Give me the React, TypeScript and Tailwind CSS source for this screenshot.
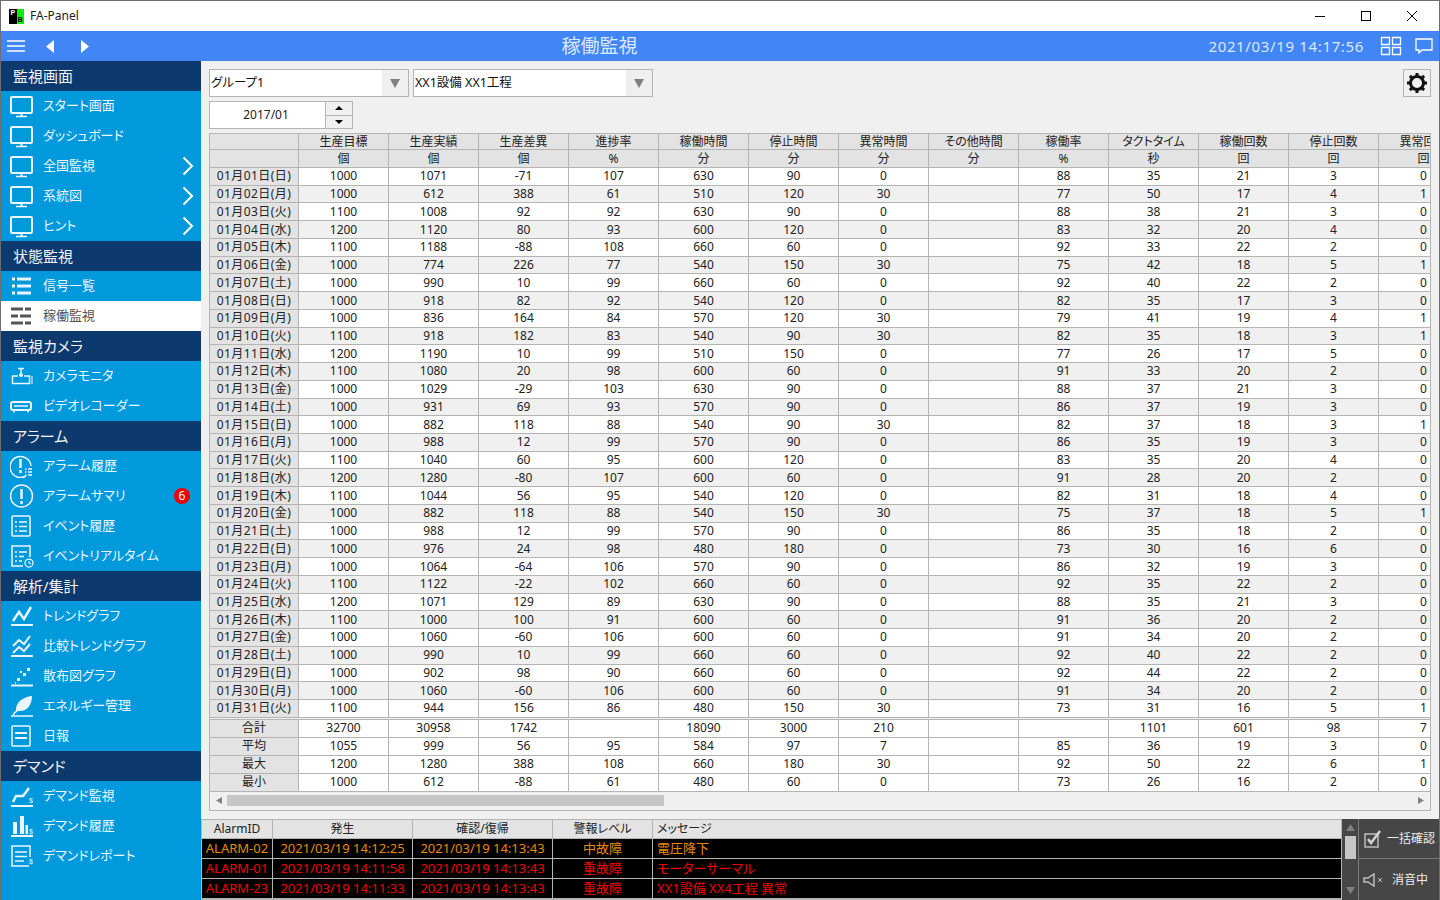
import { ReactNode } from 'react';

type Item = { label: string; icon: ReactNode; more?: boolean; badge?: string; active?: boolean };
type Section = { title: string; items: Item[] };

const Svg = ({ children }: { children: ReactNode }) => (
  <svg width="24" height="24" viewBox="0 0 24 24" fill="none" stroke="currentColor" strokeWidth="2">
    {children}
  </svg>
);

const Monitor = () => (
  <Svg>
    <rect x="1" y="3" width="21" height="16" rx="1" />
    <path d="M11.5 19v3" />
    <path d="M6 22.5h11" strokeWidth="1.5" />
  </Svg>
);

const Lines = () => (
  <Svg>
    <path d="M2 5h3M7 5h14M2 12h3M7 12h14M2 19h3M7 19h14" strokeWidth="3" />
  </Svg>
);

const Bars = () => (
  <Svg>
    <path d="M1 5h12M15 5h6M1 12h7M10 12h11M1 19h12M15 19h6" strokeWidth="3" />
  </Svg>
);

const Camera = () => (
  <Svg>
    <path d="M8 4.5h6M11 4v5" strokeWidth="1.5" />
    <circle cx="11" cy="11" r="2" fill="currentColor" stroke="none" />
    <path d="M8 12H2.5v7.5h17V12H14" strokeWidth="1.5" />
    <path d="M22 12v8" strokeWidth="1.5" opacity="0.7" />
  </Svg>
);

const Recorder = () => (
  <Svg>
    <rect x="1" y="8" width="20" height="8" rx="2" />
    <path d="M4 12h14" strokeWidth="1.5" />
    <path d="M4 17v1.5M18 17v1.5" strokeWidth="1.5" />
  </Svg>
);

const AlarmLog = () => (
  <Svg>
    <path d="M16 22a10.5 10.5 0 1 1 5-10" strokeWidth="1.5" />
    <path d="M10.5 5v9M10.5 16v3" strokeWidth="2.5" />
    <path d="M15 15h1.5M18 15h4M15 18h1.5M18 18h4M15 21h1.5M18 21h4" strokeWidth="1.5" />
  </Svg>
);

const Alarm = () => (
  <Svg>
    <circle cx="11.5" cy="12" r="11" strokeWidth="1.5" />
    <path d="M11.5 5v10M11.5 17v3" strokeWidth="2.5" />
  </Svg>
);

const EventLog = () => (
  <Svg>
    <rect x="2" y="2" width="18" height="20" rx="1" strokeWidth="1.5" />
    <path d="M5 8h2M9 8h8M5 12.5h2M9 12.5h8M5 17h2M9 17h8" strokeWidth="1.5" />
  </Svg>
);

const EventLive = () => (
  <Svg>
    <path d="M13 22H2V2h18v11" strokeWidth="1.5" />
    <path d="M5 8h2M9 8h8M5 12.5h2M9 12.5h5M5 17h2M9 17h3" strokeWidth="1.5" />
    <circle cx="19" cy="19" r="4" strokeWidth="1.25" />
    <path d="M19 17v2.5h2" strokeWidth="1" />
  </Svg>
);

const Trend = () => (
  <Svg>
    <path d="M1 21h22" />
    <path d="M3 17l6-9 5 7 7-12" strokeWidth="2.5" />
  </Svg>
);

const Compare = () => (
  <Svg>
    <path d="M1 22h22" />
    <path d="M3 12l6-6 5 4 6-8" strokeWidth="2" />
    <path d="M3 19l6-6 5 4 6-7" strokeWidth="2" />
  </Svg>
);

const Scatter = () => (
  <Svg>
    <path d="M1 21.5h22" />
    <path d="M7 17h3v-3H7zM13 12h3V9h-3zM17 7h3V4h-3zM10 9h2V7h-2z" fill="currentColor" stroke="none" />
    <path d="M5 19h1" strokeWidth="1.5" />
  </Svg>
);

const Leaf = () => (
  <Svg>
    <path d="M1 22h22" strokeWidth="1.5" />
    <path d="M6 18C5 9 12 3 22 2c0 9-5 15-12 15-2 0-3 0-4 1z" fill="currentColor" stroke="none" />
    <path d="M3 21c1-2 2-3 4-4" strokeWidth="1.5" />
  </Svg>
);

const Daily = () => (
  <Svg>
    <rect x="2" y="2" width="18" height="20" rx="1" strokeWidth="1.5" />
    <path d="M5 9h12M5 14h12" strokeWidth="2" />
  </Svg>
);

const Dollar = ({ x, y }: { x: number; y: number }) => (
  <text x={x} y={y} fontSize="7" fill="currentColor" stroke="none" fontFamily="Liberation Sans">$</text>
);

const DemandLine = () => (
  <Svg>
    <path d="M1 22h22" />
    <path d="M3 18l3-6h7l6-8" strokeWidth="2.5" />
    <Dollar x={19} y={19} />
  </Svg>
);

const DemandBars = () => (
  <Svg>
    <path d="M1 22h22" />
    <path d="M3 8h4v12H3zM10 2h4v18h-4zM15.5 11h2.5v9h-2.5z" fill="currentColor" stroke="none" />
    <Dollar x={19} y={20} />
  </Svg>
);

const DemandReport = () => (
  <Svg>
    <path d="M20 13V2H2v20h17" strokeWidth="1.5" />
    <path d="M5 8h12M5 12.5h12M5 17h9" strokeWidth="1.5" />
    <Dollar x={19} y={20} />
  </Svg>
);

const sections: Section[] = [
  {
    title: '監視画面',
    items: [
      { label: 'スタート画面', icon: <Monitor /> },
      { label: 'ダッシュボード', icon: <Monitor /> },
      { label: '全国監視', icon: <Monitor />, more: true },
      { label: '系統図', icon: <Monitor />, more: true },
      { label: 'ヒント', icon: <Monitor />, more: true },
    ],
  },
  {
    title: '状態監視',
    items: [
      { label: '信号一覧', icon: <Lines /> },
      { label: '稼働監視', icon: <Bars />, active: true },
    ],
  },
  {
    title: '監視カメラ',
    items: [
      { label: 'カメラモニタ', icon: <Camera /> },
      { label: 'ビデオレコーダー', icon: <Recorder /> },
    ],
  },
  {
    title: 'アラーム',
    items: [
      { label: 'アラーム履歴', icon: <AlarmLog /> },
      { label: 'アラームサマリ', icon: <Alarm />, badge: '6' },
      { label: 'イベント履歴', icon: <EventLog /> },
      { label: 'イベントリアルタイム', icon: <EventLive /> },
    ],
  },
  {
    title: '解析/集計',
    items: [
      { label: 'トレンドグラフ', icon: <Trend /> },
      { label: '比較トレンドグラフ', icon: <Compare /> },
      { label: '散布図グラフ', icon: <Scatter /> },
      { label: 'エネルギー管理', icon: <Leaf /> },
      { label: '日報', icon: <Daily /> },
    ],
  },
  {
    title: 'デマンド',
    items: [
      { label: 'デマンド監視', icon: <DemandLine /> },
      { label: 'デマンド履歴', icon: <DemandBars /> },
      { label: 'デマンドレポート', icon: <DemandReport /> },
    ],
  },
];

const headers = ['生産目標', '生産実績', '生産差異', '進捗率', '稼働時間', '停止時間', '異常時間', 'その他時間', '稼働率', 'タクトタイム', '稼働回数', '停止回数', '異常回数'];
const units = ['個', '個', '個', '%', '分', '分', '分', '分', '%', '秒', '回', '回', '回'];

const raw = `1000 1071 -71 107 630 90 0 88 35 21 3 0
1000 612 388 61 510 120 30 77 50 17 4 1
1100 1008 92 92 630 90 0 88 38 21 3 0
1200 1120 80 93 600 120 0 83 32 20 4 0
1100 1188 -88 108 660 60 0 92 33 22 2 0
1000 774 226 77 540 150 30 75 42 18 5 1
1000 990 10 99 660 60 0 92 40 22 2 0
1000 918 82 92 540 120 0 82 35 17 3 0
1000 836 164 84 570 120 30 79 41 19 4 1
1100 918 182 83 540 90 30 82 35 18 3 1
1200 1190 10 99 510 150 0 77 26 17 5 0
1100 1080 20 98 600 60 0 91 33 20 2 0
1000 1029 -29 103 630 90 0 88 37 21 3 0
1000 931 69 93 570 90 0 86 37 19 3 0
1000 882 118 88 540 90 30 82 37 18 3 1
1000 988 12 99 570 90 0 86 35 19 3 0
1100 1040 60 95 600 120 0 83 35 20 4 0
1200 1280 -80 107 600 60 0 91 28 20 2 0
1100 1044 56 95 540 120 0 82 31 18 4 0
1000 882 118 88 540 150 30 75 37 18 5 1
1000 988 12 99 570 90 0 86 35 18 2 0
1000 976 24 98 480 180 0 73 30 16 6 0
1000 1064 -64 106 570 90 0 86 32 19 3 0
1100 1122 -22 102 660 60 0 92 35 22 2 0
1200 1071 129 89 630 90 0 88 35 21 3 0
1100 1000 100 91 600 60 0 91 36 20 2 0
1000 1060 -60 106 600 60 0 91 34 20 2 0
1000 990 10 99 660 60 0 92 40 22 2 0
1000 902 98 90 660 60 0 92 44 22 2 0
1000 1060 -60 106 600 60 0 91 34 20 2 0
1100 944 156 86 480 150 30 73 31 16 5 1`;

const weekdays = ['日', '月', '火', '水', '木', '金', '土'];

const rows = raw.split('\n').map((line, i) => {
  const v = line.split(' ');
  const day = String(i + 1).padStart(2, '0');
  return {
    label: `01月${day}日(${weekdays[i % 7]})`,
    // その他時間 is always blank
    cells: [...v.slice(0, 7), '', ...v.slice(7)],
  };
});

const totals = [
  { label: '合計', cells: ['32700', '30958', '1742', '', '18090', '3000', '210', '', '', '1101', '601', '98', '7'] },
  { label: '平均', cells: ['1055', '999', '56', '95', '584', '97', '7', '', '85', '36', '19', '3', '0'] },
  { label: '最大', cells: ['1200', '1280', '388', '108', '660', '180', '30', '', '92', '50', '22', '6', '1'] },
  { label: '最小', cells: ['1000', '612', '-88', '61', '480', '60', '0', '', '73', '26', '16', '2', '0'] },
];

const alarms = [
  { id: 'ALARM-02', at: '2021/03/19 14:12:25', ack: '2021/03/19 14:13:43', level: '中故障', msg: '電圧降下', color: 'text-[#e88a00]' },
  { id: 'ALARM-01', at: '2021/03/19 14:11:58', ack: '2021/03/19 14:13:43', level: '重故障', msg: 'モーターサーマル', color: 'text-[#f00000]' },
  { id: 'ALARM-23', at: '2021/03/19 14:11:33', ack: '2021/03/19 14:13:43', level: '重故障', msg: 'XX1設備 XX4工程 異常', color: 'text-[#f00000]' },
];

const cell = 'flex items-center justify-center border-r border-b border-[#b4b4b4] whitespace-nowrap overflow-hidden';
const gridCols = 'grid grid-cols-[89px_repeat(13,90px)]';
const alarmCols = 'grid grid-cols-[71px_140px_140px_100px_1fr]';

function Combo({ value, className }: { value: string; className: string }) {
  return (
    <div className={`flex h-7 border border-[#b4b4b4] bg-white ${className}`}>
      <div className="flex-1 pl-[1px] flex items-center text-[12.5px] text-[#111]">{value}</div>
      <div className="w-[26px] bg-[#efefef] flex items-center justify-center">
        <svg width="10" height="9" viewBox="0 0 10 9"><path d="M0 0h10L5 9z" fill="#808080" /></svg>
      </div>
    </div>
  );
}

function Sidebar() {
  return (
    <nav className="w-[200px] shrink-0 bg-[#0099dc]">
      {sections.map((s) => (
        <div key={s.title}>
          <div className="h-[30px] bg-[#0d3a6e] text-[#f4f4f4] text-[15px] pl-[12px] flex items-center">{s.title}</div>
          {s.items.map((item) => (
            <div
              key={item.label}
              className={`h-[30px] flex items-center pl-[9px] text-[13px] ${item.active ? 'bg-white text-[#555]' : 'text-[#eaf6ff]'}`}
            >
              <span className="w-[33px] shrink-0 flex">{item.icon}</span>
              <span>{item.label}</span>
              {item.more && (
                <svg className="ml-auto mr-[7px]" width="12" height="20" viewBox="0 0 12 20" fill="none" stroke="#fff" strokeWidth="2">
                  <path d="M1.5 1.5L10 10l-8.5 8.5" />
                </svg>
              )}
              {item.badge && (
                <span className="ml-auto mr-[11px] w-4 h-4 rounded-full bg-[#f00000] text-white text-[12px] flex items-center justify-center">
                  {item.badge}
                </span>
              )}
            </div>
          ))}
        </div>
      ))}
    </nav>
  );
}

function DataTable() {
  return (
    <div className="mt-1 h-[678px] border border-[#b4b4b4] overflow-hidden text-[12px] text-[#222] flex flex-col">
      <div className={`${gridCols} h-4 bg-[#e3e3e3] shrink-0`}>
        <div className={cell} />
        {headers.map((h) => <div key={h} className={cell}>{h}</div>)}
      </div>
      <div className={`${gridCols} h-[18px] bg-[#e3e3e3] shrink-0`}>
        <div className={cell} />
        {units.map((u, i) => <div key={i} className={cell}>{u}</div>)}
      </div>
      {rows.map((r, i) => (
        <div key={r.label} className={`${gridCols} h-[17.74px] shrink-0 ${i % 2 ? 'bg-[#f0f0f0]' : 'bg-white'}`}>
          <div className={`${cell} bg-[#e3e3e3] tracking-[0.45px]`}>{r.label}</div>
          {r.cells.map((c, j) => <div key={j} className={cell}>{c}</div>)}
        </div>
      ))}
      <div className="h-[2px] shrink-0 border-b border-[#b4b4b4]" />
      {totals.map((r) => (
        <div key={r.label} className={`${gridCols} h-[18px] shrink-0 bg-white`}>
          <div className={`${cell} bg-[#e3e3e3]`}>{r.label}</div>
          {r.cells.map((c, j) => <div key={j} className={cell}>{c}</div>)}
        </div>
      ))}
      <div className="flex-1 flex items-center px-[6px]">
        <svg width="7" height="7" viewBox="0 0 7 7"><path d="M6 0v7L0 3.5z" fill="#808080" /></svg>
        <div className="ml-[4px] w-[437px] h-[11px] bg-[#c6c6c6]" />
        <svg className="ml-auto" width="7" height="7" viewBox="0 0 7 7"><path d="M1 0v7l6-3.5z" fill="#808080" /></svg>
      </div>
    </div>
  );
}

function AlarmPanel() {
  return (
    <div className="flex-1 flex mt-2 min-h-0">
      <div className="flex-1 flex flex-col border-t border-l border-[#b4b4b4] bg-[#b4b4b4]">
        <div className={`${alarmCols} h-[19px] bg-[#e3e3e3] text-[12px] text-[#222] shrink-0`}>
          <div className={cell}>AlarmID</div>
          <div className={cell}>発生</div>
          <div className={cell}>確認/復帰</div>
          <div className={cell}>警報レベル</div>
          <div className={`${cell} justify-start pl-1`}>メッセージ</div>
        </div>
        {alarms.map((a) => (
          <div key={a.id} className={`${alarmCols} h-5 bg-black text-[13px] shrink-0 ${a.color}`}>
            <div className={cell}>{a.id}</div>
            <div className={cell}>{a.at}</div>
            <div className={cell}>{a.ack}</div>
            <div className={cell}>{a.level}</div>
            <div className={`${cell} justify-start pl-1`}>{a.msg}</div>
          </div>
        ))}
      </div>
      <div className="w-[97px] shrink-0 bg-[#464646] flex">
        <div className="w-[17px] shrink-0 border-r border-[#7a7a7a] flex flex-col items-center pt-[5px] pb-[6px]">
          <svg width="9" height="7" viewBox="0 0 9 7"><path d="M4.5 0L9 7H0z" fill="#808080" /></svg>
          <div className="mt-[5px] w-[11px] h-[23px] bg-[#c6c6c6]" />
          <svg className="mt-auto" width="9" height="7" viewBox="0 0 9 7"><path d="M0 0h9L4.5 7z" fill="#808080" /></svg>
        </div>
        <div className="flex-1 flex flex-col text-[#ececec] text-[12px]">
          <div className="h-[40px] border-b border-[#7a7a7a] flex items-center pl-[5px] gap-[5px]">
            <svg width="18" height="18" viewBox="0 0 18 18" fill="none" stroke="#bdbdbd" strokeWidth="1.5">
              <rect x="1" y="4" width="13" height="13" />
              <path d="M4 9l3 4 9-12" strokeWidth="2.5" stroke="#d4d4d4" />
            </svg>
            <span>一括確認</span>
          </div>
          <div className="flex-1 flex items-center pl-[4px]">
            <svg width="20" height="14" viewBox="0 0 20 14" fill="none" stroke="#bdbdbd" strokeWidth="1.5">
              <path d="M1 5h4l6-4v12L5 9H1z" />
              <path d="M15 5l4 4M19 5l-4 4" strokeWidth="1" />
            </svg>
            <span className="ml-[9px]">消音中</span>
          </div>
        </div>
      </div>
    </div>
  );
}

export default function App() {
  return (
    <div className="w-[1440px] h-[900px] overflow-hidden flex flex-col border-t border-x border-[#6e6e6e] bg-[#f0f0f0] [font-family:'Noto_Sans','Noto_Sans_CJK_JP',sans-serif] [font-feature-settings:'palt']">
      {/* title bar */}
      <div className="h-[30px] shrink-0 bg-white flex items-center pl-2">
        <div className="w-[15px] h-[15px] grid grid-cols-2 grid-rows-2 text-[7px] leading-none font-bold [font-family:'Liberation_Sans',sans-serif]">
          <span className="bg-black text-white flex items-center justify-center">P</span>
          <span className="bg-[#00f000]" />
          <span className="bg-black" />
          <span className="bg-[#00f000] text-black flex items-center justify-center">B</span>
        </div>
        <span className="ml-[6px] text-[12px] text-[#222]">FA-Panel</span>
        <div className="ml-auto flex items-center text-black">
          <svg width="46" height="12" viewBox="0 0 46 12" stroke="#000"><path d="M18 6.5h10" /></svg>
          <svg width="46" height="12" viewBox="0 0 46 12" fill="none" stroke="#000"><rect x="18.5" y="1.5" width="9" height="9" /></svg>
          <svg className="mr-[4px]" width="46" height="12" viewBox="0 0 46 12" stroke="#000"><path d="M18 1l10 10M28 1L18 11" /></svg>
        </div>
      </div>
      {/* top bar */}
      <div className="h-[30px] shrink-0 bg-[#4285f4] flex items-center text-[#dce8ff]">
        <svg className="ml-[6px]" width="18" height="12" viewBox="0 0 18 12" stroke="#fff" strokeWidth="1.6"><path d="M0 1h18M0 6h18M0 11h18" /></svg>
        <svg className="ml-[21px]" width="8" height="13" viewBox="0 0 8 13"><path d="M8 0v13L0 6.5z" fill="#fff" /></svg>
        <svg className="ml-[27px]" width="8" height="13" viewBox="0 0 8 13"><path d="M0 0v13l8-6.5z" fill="#fff" /></svg>
        <div className="w-[1119px] shrink-0 text-center text-[19px] -ml-[88px] pl-[78px]">稼働監視</div>
        <span className="ml-auto text-[15px] tracking-[0.65px]">2021/03/19 14:17:56</span>
        <svg className="ml-[16px]" width="22" height="20" viewBox="0 0 22 20" fill="none" stroke="#fff" strokeWidth="1.3">
          <path d="M1.5 1.5h8v7h-8zM12.5 1.5h8v7h-8zM1.5 11.5h8v7h-8zM12.5 11.5h8v7h-8z" />
        </svg>
        <svg className="ml-[13px] mr-[6px]" width="18" height="17" viewBox="0 0 18 17" fill="none" stroke="#fff" strokeWidth="1.3">
          <path d="M1 1h16v11H7l-3 3v-3H1z" />
        </svg>
      </div>
      <div className="flex-1 flex min-h-0">
        <Sidebar />
        <main className="flex-1 min-w-0 flex flex-col pt-2">
          <div className="px-2 flex items-start">
            <Combo value="グループ1" className="w-[200px]" />
            <Combo value="XX1設備 XX1工程" className="w-[240px] ml-1" />
            <div className="ml-auto w-7 h-7 border border-[#b4b4b4] flex items-center justify-center">
              <svg width="22" height="22" viewBox="0 0 22 22" fill="none" stroke="#111">
                <circle cx="11" cy="11" r="6.5" strokeWidth="3" />
                <path d="M11 1v4M11 17v4M1 11h4M17 11h4M3.9 3.9l2.8 2.8M15.3 15.3l2.8 2.8M18.1 3.9l-2.8 2.8M6.7 15.3l-2.8 2.8" strokeWidth="3" />
              </svg>
            </div>
          </div>
          <div className="px-2 mt-1 flex">
            <div className="w-[144px] h-7 border border-[#b4b4b4] bg-white flex">
              <div className="flex-1 flex items-center justify-center text-[12px] text-[#222] pr-[3px]">2017/01</div>
              <div className="w-[27px] border-l border-[#b4b4b4] bg-[#f0f0f0] flex flex-col">
                <div className="flex-1 border-b border-[#b4b4b4] flex items-center justify-center">
                  <svg width="8" height="4" viewBox="0 0 8 4"><path d="M4 0l4 4H0z" fill="#000" /></svg>
                </div>
                <div className="flex-1 flex items-center justify-center">
                  <svg width="8" height="4" viewBox="0 0 8 4"><path d="M0 0h8L4 4z" fill="#000" /></svg>
                </div>
              </div>
            </div>
          </div>
          <div className="px-2">
            <DataTable />
          </div>
          <AlarmPanel />
        </main>
      </div>
    </div>
  );
}
